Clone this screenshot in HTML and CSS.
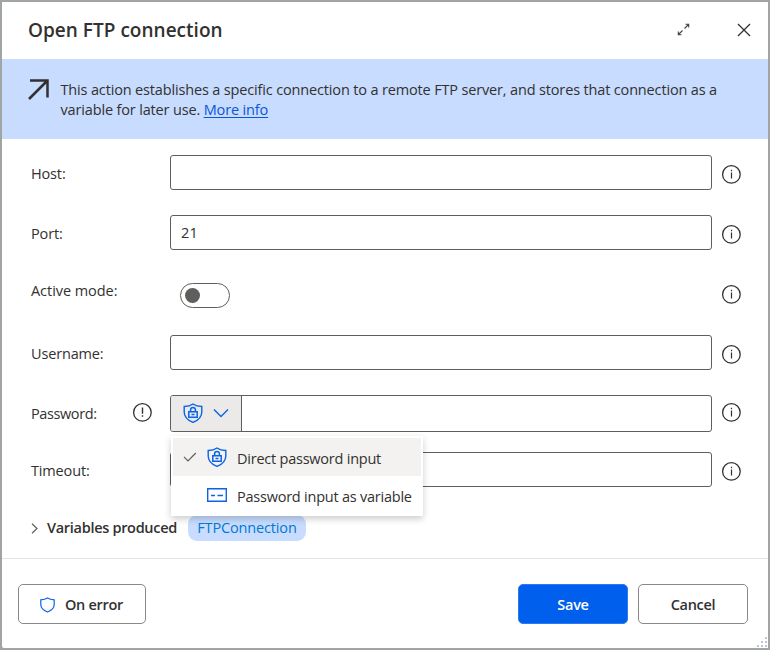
FILE: index.html
```
<!DOCTYPE html>
<html lang="en">
<head>
<meta charset="utf-8">
<title>Open FTP connection</title>
<link rel="stylesheet" href="styles.css">
</head>
<body>
<svg class="defs" width="0" height="0">
  <symbol id="info" viewBox="0 0 20 20"><circle cx="10.400" cy="10.400" r="8.800" fill="none" stroke="#323130" stroke-width="1.300"/><path d="M10.500 8.500v6M10.500 5.800v1.500" stroke="#323130" stroke-width="1.200"/></symbol>
  <symbol id="lock-shield" viewBox="0 0 20 20"><path d="M10 1C7.600 2.700 4.500 3.400 1.200 3.500V9c0 5 4 8.500 8.800 10.400C14.800 17.500 18.800 14 18.800 9V3.500C15.500 3.400 12.400 2.700 10 1Z" fill="none" stroke="#0b63e8" stroke-width="1.400"/><path d="M5.800 8.800h8.400v5.400H5.800zM7.600 8.800V6.800a2.400 2.400 0 0 1 4.800 0v2M8.500 11.500h3" fill="none" stroke="#0b63e8" stroke-width="1.500"/></symbol>
</svg>
<div class="dialog">
  <header class="titlebar">
    <h1>Open FTP connection</h1>
    <svg class="expand" width="13" height="13" viewBox="0 0 13 13"><path d="M7.500 5.500l4-4M8.500 1.300h3.200v3.200M5.500 7.500l-4 4M1.300 8.500v3.200h3.200" fill="none" stroke="#484644" stroke-width="1.100"/></svg>
    <svg class="close" width="14" height="14" viewBox="0 0 14 14"><path d="M1 1l12 12M13 1L1 13" stroke="#323130" stroke-width="1.300"/></svg>
  </header>
  <section class="banner">
    <svg width="22" height="22" viewBox="0 0 22 22"><path d="M2 1.500h17.500v17M19.500 1.500L1 20" fill="none" stroke="#323130" stroke-width="2.500"/></svg>
    <p>This action establishes a specific connection to a remote FTP server, and stores that connection as a<br>variable for later use. <a href="#">More info</a></p>
  </section>
  <main class="form">
    <div class="row"><label>Host:</label><div class="field"></div><svg class="info"><use href="#info"/></svg></div>
    <div class="row"><label>Port:</label><div class="field">21</div><svg class="info"><use href="#info"/></svg></div>
    <div class="row"><label class="mode">Active mode:</label><div class="toggle-wrap"><span class="toggle"></span></div><svg class="info"><use href="#info"/></svg></div>
    <div class="row"><label>Username:</label><div class="field"></div><svg class="info"><use href="#info"/></svg></div>
    <div class="row password"><label>Password:</label>
      <svg class="info warn" viewBox="0 0 20 20"><circle cx="10.400" cy="10.400" r="8.800" fill="none" stroke="#323130" stroke-width="1.300"/><path d="M10.500 5.500v6.300M10.500 13.300v1.500" stroke="#323130" stroke-width="1.400"/></svg>
      <div class="field"><div class="picker"><svg width="20" height="20"><use href="#lock-shield"/></svg><svg width="16" height="10" viewBox="0 0 16 10"><path d="M1 1.500l7 7 7-7" fill="none" stroke="#0b63e8" stroke-width="1.400"/></svg></div></div>
      <svg class="info"><use href="#info"/></svg>
      <div class="menu">
        <div class="item selected"><svg class="check" width="14" height="10" viewBox="0 0 14 10"><path d="M1 4.800l4 4L12.800 1" fill="none" stroke="#605e5c" stroke-width="1.200"/></svg><svg width="20" height="20"><use href="#lock-shield"/></svg><span class="text">Direct password input</span></div>
        <div class="item"><span class="check"></span><svg width="20" height="20" viewBox="0 0 20 20"><path d="M.7 3.700h18.600v12.600H.7z" fill="none" stroke="#0b63e8" stroke-width="1.400"/><path d="M4 10.500h4M10.500 10.500h5.500" stroke="#0b63e8" stroke-width="1.400"/></svg><span class="text">Password input as variable</span></div>
      </div>
    </div>
    <div class="row timeout"><label>Timeout:</label><div class="field"></div><svg class="info"><use href="#info"/></svg></div>
    <div class="produced"><svg width="7" height="11" viewBox="0 0 7 11"><path d="M1 .8l5 4.700-5 4.700" fill="none" stroke="#605e5c" stroke-width="1.200"/></svg><b>Variables produced</b><span class="chip">FTPConnection</span></div>
  </main>
  <footer class="footer">
    <button class="on-error"><svg width="15" height="16" viewBox="0 0 15 16"><path d="M7.500 1C5.500 2.300 3.300 2.700.8 2.800v4.700c0 3.800 3 6 6.700 7.500 3.700-1.500 6.700-3.700 6.700-7.500V2.800C11.700 2.700 9.500 2.300 7.500 1Z" fill="none" stroke="#0b63e8" stroke-width="1.200"/></svg><span>On error</span></button>
    <button class="save">Save</button><button>Cancel</button>
    <svg class="grip" width="12" height="12" viewBox="0 0 12 12"><path d="M9 0h2v2H9zM5 4h2v2H5zM9 4h2v2H9zM1 8h2v2H1zM5 8h2v2H5zM9 8h2v2H9z" fill="#bcc4d8"/></svg>
  </footer>
</div>
</body>
</html>
```
FILE: styles.css
```
* { box-sizing: border-box; }
body { margin: 0; background: #a0a5a3; font: 14.5px/20px "Open Sans", "Noto Sans", sans-serif; color: #323130; }
svg { flex: none; display: block; }
.defs { position: absolute; }
.dialog { width: 770px; height: 650px; border: 2px solid #a0a5a3; background: #fff; border-radius: 0 0 0 4px; display: flex; flex-direction: column; }
.titlebar { height: 57px; display: flex; align-items: center; padding: 0 18px 0 26px; }
h1 { flex: 1; margin: -2px 0 0; font-size: 19px; line-height: 28px; font-weight: 600; letter-spacing: 0.02px; }
.expand { margin: -3px 47px 0 0; }
.close { margin: -1px -1px 0 0; }
.banner { height: 80px; background: #c7dcff; display: flex; padding: 20px 0 0 26px; }
.banner p { margin: 1px 0 0 10.5px; white-space: nowrap; letter-spacing: -0.155px; }
a { color: #0b55d9; text-underline-offset: 2px; }
.form { height: 420px; border-bottom: 1px solid #e5e5e5; padding: 16px 25px 0 29px; }
.row { display: flex; align-items: center; height: 35px; margin-bottom: 25px; }
.row label { width: 139px; letter-spacing: -0.15px; padding-top: 2px; }
.row label.mode { padding: 0 0 4px; letter-spacing: -0.05px; }
.field { width: 542px; height: 100%; border: 1px solid #605e5c; border-radius: 3px; padding: 7px 10px; letter-spacing: 0.1px; }
.info { width: 20px; height: 20px; margin: 3px 0 0 9px; }
.toggle-wrap { width: 542px; padding: 6px 0 0 10px; }
.toggle { display: flex; align-items: center; width: 50px; height: 25px; border: 1.5px solid #605e5c; border-radius: 13px; padding-left: 4px; }
.toggle::before { content: ""; width: 15px; height: 15px; border-radius: 50%; background: #605e5c; }
.row.password { height: 37px; margin-bottom: 20px; position: relative; }
.password label { width: 101px; letter-spacing: -0.4px; padding: 0; }
.password .info { margin-top: -4px; }
.password .warn { margin: -4px 18px 0 0; }
.password .field { padding: 0; overflow: hidden; }
.picker { width: 71px; height: 100%; display: flex; align-items: center; gap: 10px; padding: 0 0 2px 11.5px; background: #ebeae9; border-right: 1px solid #605e5c; }
.menu { position: absolute; left: 140px; top: 41px; width: 252px; height: 80px; background: #fff; box-shadow: 0 3px 7px rgba(0,0,0,.2); padding: 2px; z-index: 1; }
.item { height: 38px; display: flex; align-items: center; padding-left: 10px; white-space: nowrap; }
.item.selected { background: #f3f2f1; }
.check { width: 14px; margin-right: 10px; }
.text { margin-left: 10px; padding-top: 4px; letter-spacing: -0.23px; }
.produced { display: flex; align-items: center; height: 26px; margin-top: 28px; }
.produced b { font-weight: 600; margin-left: 9px; letter-spacing: -0.3px; }
.chip { margin-left: 11px; height: 26px; width: 118px; text-align: center; background: #c7dcff; color: #0078d4; line-height: 25px; border-radius: 9px; letter-spacing: -0.15px; }
.row.timeout { margin-bottom: 0; }
.timeout label { padding-top: 3px; }
.footer { display: flex; padding: 25px 20px 0 16px; position: relative; }
button { font: 600 14.5px/20px "Open Sans", sans-serif; letter-spacing: -0.3px; color: #323130; width: 110px; height: 40px; border: 1px solid #8a8886; border-radius: 5px; background: #fff; padding: 1px 0 0; margin-left: 10px; }
.on-error { width: 128px; margin: 0 auto 0 0; padding-right: 1px; display: flex; justify-content: center; align-items: center; gap: 10px; }
.save { background: #005fec; color: #fff; border-color: #2b7af0; }
.grip { position: absolute; right: 0; top: 78px; }
```
